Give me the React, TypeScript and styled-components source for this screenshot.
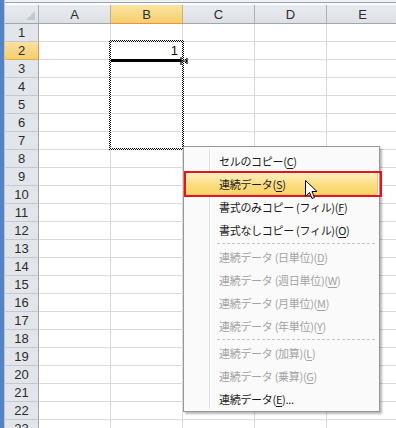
import styled, { createGlobalStyle } from "styled-components";

const GlobalStyle = createGlobalStyle`
  html, body { margin: 0; padding: 0; background: #fff; overflow: hidden; }
  #root { width: 396px; height: 428px; }
`;

const COLS = ["A", "B", "C", "D", "E"];
const ROWS = Array.from({ length: 23 }, (_, i) => i + 1);

const Window = styled.div`
  position: relative;
  display: flex;
  width: 396px;
  height: 428px;
  overflow: hidden;
  font-family: "Liberation Sans", Arial, sans-serif;
`;

const Frame = styled.div`
  flex: 0 0 4px;
  background: #5283c9;
  border-right: 1px solid #b4c7e0;
`;

const Sheet = styled.div`
  flex: 1;
  display: flex;
  flex-direction: column;
`;

const TopBar = styled.div`
  height: 5px;
  flex: 0 0 5px;
  background: linear-gradient(#eef1f5 0 2px, #9aa3ae 2px 3px, #fff 3px);
`;

const Grid = styled.div`
  position: relative;
  display: grid;
  grid-template-columns: 34px repeat(5, 72px);
  grid-template-rows: 19px;
  grid-auto-rows: 18px;
`;

const Corner = styled.div`
  position: relative;
  box-sizing: border-box;
  background: linear-gradient(#e8ebef, #dde1e6);
  border-right: 1px solid #a9b0b8;
  border-bottom: 1px solid #9da5ae;
  &::after {
    content: "";
    position: absolute;
    right: 3px;
    bottom: 3px;
    width: 9px;
    height: 9px;
    background: #c4c9cf;
    clip-path: polygon(100% 0, 100% 100%, 0 100%);
  }
`;

const ColHead = styled.div<{ $active?: boolean }>`
  box-sizing: border-box;
  display: flex;
  align-items: center;
  justify-content: center;
  font-size: 13px;
  color: #2c2c2c;
  background: ${(p) =>
    p.$active
      ? "linear-gradient(#fbe3a2, #f6cf6d)"
      : "linear-gradient(#e8ebef, #dde1e6)"};
  border-right: 1px solid ${(p) => (p.$active ? "#e2ae4f" : "#a9b0b8")};
  border-bottom: 1px solid ${(p) => (p.$active ? "#f29436" : "#9da5ae")};
`;

const RowHead = styled.div<{ $active?: boolean }>`
  box-sizing: border-box;
  display: flex;
  align-items: center;
  justify-content: center;
  font-size: 13px;
  color: #2c2c2c;
  background: ${(p) =>
    p.$active ? "linear-gradient(#fbe0a0, #f5cd6c)" : "#e2e6eb"};
  border-right: 1px solid ${(p) => (p.$active ? "#f29436" : "#9da5ae")};
  border-bottom: 1px solid ${(p) => (p.$active ? "#e2ae4f" : "#c3c9d0")};
`;

const Cell = styled.div<{ $align?: "left" | "right" }>`
  box-sizing: border-box;
  display: flex;
  align-items: center;
  justify-content: ${(p) => (p.$align === "right" ? "flex-end" : "flex-start")};
  padding: 0 4px 0 2px;
  font-size: 13px;
  color: #111;
  border-right: 1px solid #d9dadb;
  border-bottom: 1px solid #d9dadb;
`;

const Marquee = styled.div`
  position: absolute;
  left: 104px;
  top: 35px;
  width: 75px;
  height: 110px;
  box-sizing: border-box;
  padding: 2px;
  background: repeating-conic-gradient(#000 0 25%, #fff 0 50%) 0 0 / 2px 2px;
  -webkit-mask: linear-gradient(#000 0 0) content-box, linear-gradient(#000 0 0);
  -webkit-mask-composite: xor;
  mask-composite: exclude;
  pointer-events: none;
`;

const FillBar = styled.div`
  position: absolute;
  left: 106px;
  top: 54px;
  width: 70px;
  height: 3px;
  background: #000;
`;

const FillHandle = styled.svg`
  position: absolute;
  left: 175px;
  top: 52px;
`;

const Menu = styled.div`
  position: absolute;
  left: 183px;
  top: 146px;
  width: 197px;
  box-sizing: border-box;
  padding: 2px 2px 1px;
  background: #fafafa;
  border: 1px solid #979797;
  box-shadow: 2px 2px 2px rgba(0, 0, 0, 0.28);
  font-family: "Noto Sans CJK JP", "Liberation Sans", sans-serif;
  font-size: 11px;
  &::before {
    content: "";
    position: absolute;
    left: 25px;
    top: 2px;
    bottom: 2px;
    width: 1px;
    background: #e2e3e3;
    box-shadow: 1px 0 0 #fff;
  }
`;

const Item = styled.div<{ $disabled?: boolean; $active?: boolean }>`
  position: relative;
  height: 23px;
  display: flex;
  align-items: center;
  padding-left: 33px;
  color: ${(p) => (p.$disabled ? "#a3a3a3" : "#1b1b1b")};
  letter-spacing: -0.3px;
  white-space: nowrap;
  ${(p) =>
    p.$active &&
    `
    background: linear-gradient(#fdf0c2, #fbdc7c 60%, #f9d56a);
    border: 1px solid #eec866;
    border-radius: 2px;
    margin: 0 -1px;
    padding-left: 33px;
    box-sizing: border-box;
    &::after {
      content: "";
      position: absolute;
      left: -2px;
      right: -5px;
      top: -2px;
      bottom: -3px;
      border: 2px solid #e6121c;
    }
  `}
  u {
    text-decoration: underline;
    text-underline-offset: 2px;
  }
`;

const Separator = styled.div`
  height: 4px;
  display: flex;
  align-items: center;
  padding-left: 31px;
  padding-right: 2px;
  &::after {
    content: "";
    flex: 1;
    border-top: 1px dashed #c6c6c6;
  }
`;

const Cursor = styled.svg`
  position: absolute;
  left: 305px;
  top: 180px;
`;

type Entry =
  | { sep: true }
  | { label: string; key: string; disabled?: boolean; active?: boolean; suffix?: string };

const ENTRIES: Entry[] = [
  { label: "セルのコピー", key: "C" },
  { label: "連続データ", key: "S", active: true },
  { label: "書式のみコピー (フィル)", key: "F" },
  { label: "書式なしコピー (フィル)", key: "O" },
  { sep: true },
  { label: "連続データ (日単位)", key: "D", disabled: true },
  { label: "連続データ (週日単位)", key: "W", disabled: true },
  { label: "連続データ (月単位)", key: "M", disabled: true },
  { label: "連続データ (年単位)", key: "Y", disabled: true },
  { sep: true },
  { label: "連続データ (加算)", key: "L", disabled: true },
  { label: "連続データ (乗算)", key: "G", disabled: true },
  { label: "連続データ", key: "E", suffix: "..." },
];

export default function App() {
  return (
    <>
      <GlobalStyle />
      <Window>
        <Frame />
        <Sheet>
          <TopBar />
          <Grid>
            <Corner />
            {COLS.map((c) => (
              <ColHead key={c} $active={c === "B"}>
                {c}
              </ColHead>
            ))}
            {ROWS.map((r) => [
              <RowHead key={`h${r}`} $active={r === 2}>
                {r}
              </RowHead>,
              ...COLS.map((c) => (
                <Cell key={`${c}${r}`} $align="right">
                  {c === "B" && r === 2 ? "1" : ""}
                </Cell>
              )),
            ])}
            <Marquee />
            <FillBar />
            <FillHandle width="8" height="8" viewBox="0 0 8 8">
              <path d="M1 0v8M7 1v6M1 4h6" stroke="#000" strokeWidth="1.2" fill="none" />
              <path d="M5 2l2 2-2 2" stroke="#000" strokeWidth="1" fill="none" />
            </FillHandle>
          </Grid>
        </Sheet>
        <Menu>
          {ENTRIES.map((e, i) =>
            "sep" in e ? (
              <Separator key={i} />
            ) : (
              <Item key={i} $disabled={e.disabled} $active={e.active}>
                {e.label}(<u>{e.key}</u>){e.suffix}
              </Item>
            )
          )}
        </Menu>
        <Cursor width="13" height="21" viewBox="0 0 13 21">
          <path
            d="M0.5 0.5 L0.5 16.5 L4.5 12.5 L7 18.5 L9.5 17.5 L7 11.5 L12 11.5 Z"
            fill="#fff"
            stroke="#000"
            strokeWidth="1"
            strokeLinejoin="miter"
          />
        </Cursor>
      </Window>
    </>
  );
}
